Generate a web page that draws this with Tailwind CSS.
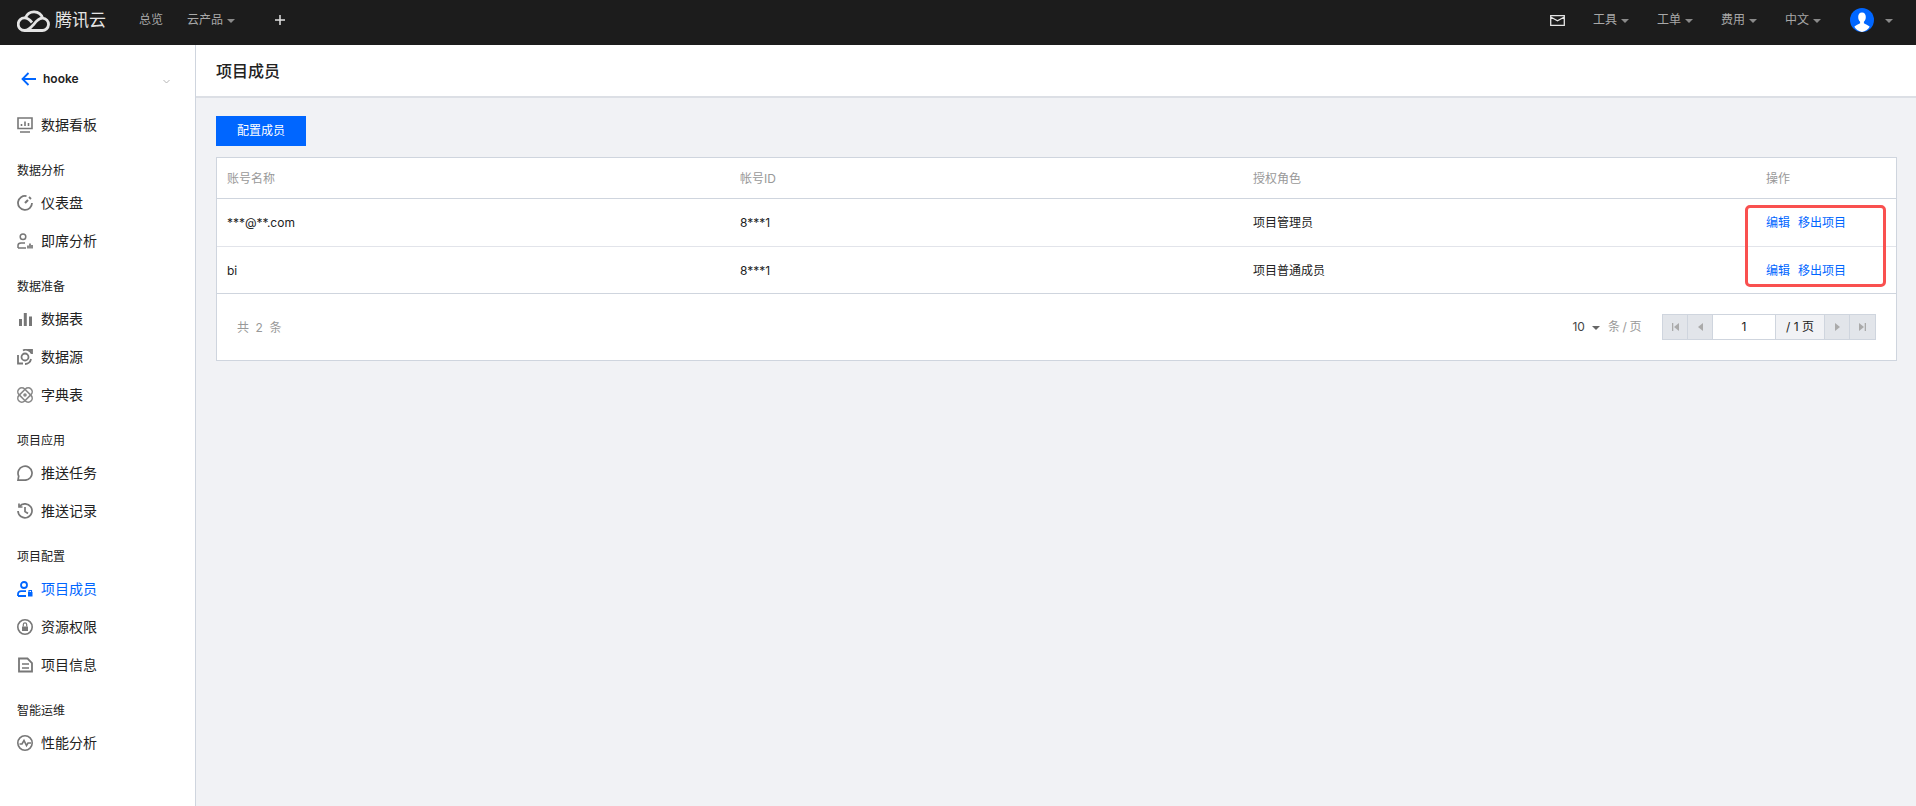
<!DOCTYPE html>
<html lang="zh-CN">
<head>
  <meta charset="UTF-8" />
  <meta name="viewport" content="width=device-width, initial-scale=1.0" />
  <title>项目成员</title>
  <script src="https://cdn.jsdelivr.net/npm/@tailwindcss/browser@4"></script>
</head>
<body class="h-[806px] overflow-hidden bg-[#f1f2f5] font-['Inter','Noto_Sans_CJK_SC',sans-serif] text-xs text-[#222]">
  <!-- top bar -->
  <header class="flex h-[45px] items-center bg-[#1c1c1c] pb-[5px] text-[#a8a8a8]">
    <svg class="ml-[17px] h-[24px] w-[33px]" viewBox="0 0 33 24" fill="none" stroke="#e4e4e4" stroke-width="2.8">
      <path d="M7.500 22.500h17.500a6.200 6.200 0 0 0 .6-12.400A9 9 0 0 0 8.600 9.600" />
      <path d="M25 10.200c-4 .2-6.500 4-9 7s-4.600 5.300-8.500 5.300a6.300 6.300 0 0 1 0-12.600c3.500 0 5.500 2.200 7.500 4.600" />
    </svg>
    <span class="ml-[5px] w-[84px] text-[17px] text-[#e4e4e4]">腾讯云</span>
    <span>总览</span>
    <span class="ml-[24px]">云产品</span>
    <i class="ml-[4px] mt-[1px] h-0 w-0 border-x-[4px] border-t-[4px] border-x-transparent border-t-[#8a8a8a]"></i>
    <svg class="ml-[40px] h-[10px] w-[10px]" viewBox="0 0 10 10" stroke="#e0e0e0" stroke-width="1.500"><path d="M5 0v10M0 5h10" /></svg>

    <svg class="ml-auto h-[11px] w-[15px]" viewBox="0 0 15 11" fill="none" stroke="#e4e4e4" stroke-width="1.300"><path d="M.7.7h13.600v9.600H.7zM.7 2l6.800 3.700L14.300 2" /></svg>
    <span class="ml-[28px]">工具</span>
    <i class="ml-[4px] mt-[1px] h-0 w-0 border-x-[4px] border-t-[4px] border-x-transparent border-t-[#8a8a8a]"></i>
    <span class="ml-[28px]">工单</span>
    <i class="ml-[4px] mt-[1px] h-0 w-0 border-x-[4px] border-t-[4px] border-x-transparent border-t-[#8a8a8a]"></i>
    <span class="ml-[28px]">费用</span>
    <i class="ml-[4px] mt-[1px] h-0 w-0 border-x-[4px] border-t-[4px] border-x-transparent border-t-[#8a8a8a]"></i>
    <span class="ml-[28px]">中文</span>
    <i class="ml-[4px] mt-[1px] h-0 w-0 border-x-[4px] border-t-[4px] border-x-transparent border-t-[#8a8a8a]"></i>
    <svg class="ml-[29px] h-[24px] w-[24px]" viewBox="0 0 24 24">
      <circle cx="12" cy="12" r="12" fill="#0066ff" />
      <path d="M12 4.500c2.600 0 3.800 2 3.800 4.500s-1 3.700-1.900 4.700v1.500c1.400 1.200 4.500 1.900 5.800 3.600A12 12 0 0 1 12 24a12 12 0 0 1-7.700-5.200c1.300-1.700 4.400-2.400 5.800-3.600v-1.500C9.200 12.700 8.200 11.500 8.200 9s1.200-4.500 3.800-4.500z" fill="#fff" />
    </svg>
    <i class="ml-[11px] mr-[23px] mt-[1px] h-0 w-0 border-x-[4px] border-t-[4px] border-x-transparent border-t-[#8a8a8a]"></i>
  </header>

  <div class="flex h-[761px]">
    <!-- sidebar -->
    <aside class="w-[196px] shrink-0 border-r border-[#cfd5de] bg-white pl-[17px] text-sm">
      <div class="flex h-[61px] items-center pt-[7px]">
        <svg class="ml-[4px] h-[14px] w-[15px]" viewBox="0 0 15 14" fill="none" stroke="#0066ff" stroke-width="1.800"><path d="M15 7H1.500M7.500 1l-6 6 6 6" /></svg>
        <span class="ml-[7px] w-[120px] text-xs font-semibold">hooke</span>
        <svg class="mt-[4px] h-[5px] w-[7px]" viewBox="0 0 7 5" fill="none" stroke="#b5b5b5"><path d="M.5 1l3 3 3-3" /></svg>
      </div>

      <a class="flex h-[38px] items-center gap-[8px]">
        <svg class="h-[16px] w-[16px]" viewBox="0 0 16 16" fill="none" stroke="#777" stroke-width="1.600"><path d="M1 1h14v10.500H1zM3 15h10" /><path d="M4.500 9V7M8 9V4.500M11.500 9V6" /></svg>
        数据看板
      </a>

      <p class="mt-[14px] flex h-[26px] items-center text-xs">数据分析</p>
      <a class="flex h-[38px] items-center gap-[8px]">
        <svg class="h-[16px] w-[16px]" viewBox="0 0 16 16" fill="none" stroke="#777" stroke-width="1.800"><path d="M9.500 1.100A7 7 0 1 0 15 8" /><path d="M11 5L8 8" stroke-width="2.200" /><path d="M12 2l2 2" /></svg>
        仪表盘
      </a>
      <a class="flex h-[38px] items-center gap-[8px]">
        <svg class="h-[16px] w-[16px]" viewBox="0 0 16 16" fill="none" stroke="#777" stroke-width="1.500"><circle cx="6" cy="3.700" r="2.800" /><path d="M1 15v-2.500c0-1.500 1.500-2.500 3-2.500h4M1 15h8" /><path d="M11 15.500v-3M13 15.500v-5M15 15.500V12" stroke-width="1.700" /></svg>
        即席分析
      </a>

      <p class="mt-[14px] flex h-[26px] items-center text-xs">数据准备</p>
      <a class="flex h-[38px] items-center gap-[8px]">
        <svg class="h-[16px] w-[16px]" viewBox="0 0 16 16" fill="#777"><path d="M2 8h3v7H2zM6.800 2h3v13h-3zM12 5.500h3V15h-3z" /></svg>
        数据表
      </a>
      <a class="flex h-[38px] items-center gap-[8px]">
        <svg class="h-[16px] w-[16px]" viewBox="0 0 16 16" fill="none" stroke="#777" stroke-width="1.800"><path d="M1 6v8.500h5M6 1.500a6 6 0 0 1 8.500 3" /><circle cx="8" cy="8" r="3.500" /><path d="M11 1h4v4" /><path d="M8 15a6 6 0 0 0 6-5" /></svg>
        数据源
      </a>
      <a class="flex h-[38px] items-center gap-[8px]">
        <svg class="h-[16px] w-[16px]" viewBox="0 0 16 16" fill="none" stroke="#888" stroke-width="1.600"><rect x="-.5" y="4" width="17" height="8" rx="4" transform="rotate(45 8 8)" /><rect x="-.5" y="4" width="17" height="8" rx="4" transform="rotate(-45 8 8)" /><circle cx="8" cy="8" r="1" fill="#888" /></svg>
        字典表
      </a>

      <p class="mt-[14px] flex h-[26px] items-center text-xs">项目应用</p>
      <a class="flex h-[38px] items-center gap-[8px]">
        <svg class="h-[16px] w-[16px]" viewBox="0 0 16 16" fill="none" stroke="#777" stroke-width="1.700"><path d="M1 15.200h7a7 7 0 1 0-6.300-4L1 15.200z" /></svg>
        推送任务
      </a>
      <a class="flex h-[38px] items-center gap-[8px]">
        <svg class="h-[16px] w-[16px]" viewBox="0 0 16 16" fill="none" stroke="#777" stroke-width="1.700"><path d="M2.500 3.500A7 7 0 1 1 1 8" /><path d="M2 .500v3.500h3.500M8 4v4.500l3 2" /></svg>
        推送记录
      </a>

      <p class="mt-[14px] flex h-[26px] items-center text-xs">项目配置</p>
      <a class="flex h-[38px] items-center gap-[8px] text-[#0066ff]">
        <svg class="h-[16px] w-[16px]" viewBox="0 0 16 16" fill="none" stroke="#0066ff" stroke-width="1.800"><circle cx="7" cy="4" r="3" /><path d="M1 15v-2c0-1.500 1.500-2.800 3-2.800h5M1 15h8" /><rect x="11" y="11" width="4.500" height="4.500" fill="#0066ff" stroke="none" /><path d="M12 11V9.500h2.500V11" stroke-width="1.100" /></svg>
        项目成员
      </a>
      <a class="flex h-[38px] items-center gap-[8px]">
        <svg class="h-[16px] w-[16px]" viewBox="0 0 16 16" fill="none" stroke="#777" stroke-width="1.600"><circle cx="8" cy="8" r="7.200" /><rect x="5" y="7.500" width="6" height="4.500" fill="#777" stroke="none" /><path d="M6.300 7.500V5.500a1.700 1.700 0 0 1 3.400 0v2" stroke-width="1.200" /></svg>
        资源权限
      </a>
      <a class="flex h-[38px] items-center gap-[8px]">
        <svg class="h-[16px] w-[16px]" viewBox="0 0 16 16" fill="none" stroke="#777" stroke-width="1.800"><path d="M2 1.500h8.500L15 6v8.500H2z" /><path d="M5 7h7M5 11h7" stroke-width="1.500" /></svg>
        项目信息
      </a>

      <p class="mt-[14px] flex h-[26px] items-center text-xs">智能运维</p>
      <a class="flex h-[38px] items-center gap-[8px]">
        <svg class="h-[16px] w-[16px]" viewBox="0 0 16 16" fill="none" stroke="#777" stroke-width="1.600"><circle cx="8" cy="8" r="7.200" /><path d="M2.500 9h2.500l2-3.500 2.500 5 1.500-2.500h3" /></svg>
        性能分析
      </a>
    </aside>

    <!-- content -->
    <main class="min-w-0 flex-1">
      <div class="flex h-[53px] items-center border-b-2 border-[#dcdfe5] bg-white pl-[20px] pt-[1px] text-base font-medium">项目成员</div>

      <div class="pl-[20px] pr-[19px] pt-[18px]">
        <button class="h-[30px] w-[90px] bg-[#0066ff] text-white">配置成员</button>

        <div class="relative mt-[11px] border border-[#cfd5de] bg-white">
          <table class="w-full table-fixed border-collapse text-left">
            <colgroup>
              <col class="w-[513px]" />
              <col class="w-[513px]" />
              <col class="w-[514px]" />
              <col />
            </colgroup>
            <thead class="border-b border-[#cfd5de] text-[#999]">
              <tr class="h-[40px]">
                <th class="px-[10px] pt-[2px] font-normal">账号名称</th>
                <th class="px-[10px] pt-[2px] font-normal">帐号ID</th>
                <th class="px-[10px] pt-[2px] font-normal">授权角色</th>
                <th class="px-[9px] pt-[2px] font-normal">操作</th>
              </tr>
            </thead>
            <tbody>
              <tr class="h-[48px] border-b border-[#e2e4ea]">
                <td class="px-[10px] pt-[2px]">***@**.com</td>
                <td class="px-[10px] pt-[2px]">8***1</td>
                <td class="px-[10px] pt-[2px]">项目管理员</td>
                <td class="px-[9px] pt-[2px] text-[#0066ff]"><a>编辑</a><a class="ml-[8px]">移出项目</a></td>
              </tr>
              <tr class="h-[47px] border-b border-[#cfd5de]">
                <td class="px-[10px] pt-[2px]">bi</td>
                <td class="px-[10px] pt-[2px]">8***1</td>
                <td class="px-[10px] pt-[2px]">项目普通成员</td>
                <td class="px-[9px] pt-[2px] text-[#0066ff]"><a>编辑</a><a class="ml-[8px]">移出项目</a></td>
              </tr>
            </tbody>
          </table>

          <div class="flex h-[66px] items-center pl-[20px] pr-[20px] text-[#999]">
            <span class="pt-[2px] tracking-[1.600px]">共 2 条</span>
            <span class="ml-auto pt-[1px] text-[#444]">10</span>
            <i class="ml-[7px] mt-[3px] h-0 w-0 border-x-[4px] border-t-[4px] border-x-transparent border-t-[#666]"></i>
            <span class="ml-[8px] pt-[1px] tracking-[-0.4px]">条 / 页</span>
            <div class="ml-[21px] flex h-[26px] border border-[#cfd5de] text-[#222]">
              <span class="flex w-[25px] items-center justify-center border-r border-[#cfd5de] bg-[#e2e5ea]">
                <svg class="h-[8px] w-[7px]" viewBox="0 0 7 8" fill="#aaa"><path d="M0 0h1.300v8H0zM7 0v8L2 4z" /></svg>
              </span>
              <span class="flex w-[25px] items-center justify-center border-r border-[#cfd5de] bg-[#e2e5ea]">
                <svg class="h-[8px] w-[5px]" viewBox="0 0 5 8" fill="#aaa"><path d="M5 0v8L0 4z" /></svg>
              </span>
              <span class="flex w-[63px] items-center justify-center border-r border-[#cfd5de] bg-white pt-[1px]">1</span>
              <span class="flex w-[49px] items-center justify-center border-r border-[#cfd5de] bg-[#f1f2f5] pt-[1px]">/ 1 页</span>
              <span class="flex w-[25px] items-center justify-center border-r border-[#cfd5de] bg-[#e2e5ea]">
                <svg class="h-[8px] w-[5px]" viewBox="0 0 5 8" fill="#aaa"><path d="M0 0v8l5-4z" /></svg>
              </span>
              <span class="flex w-[25px] items-center justify-center bg-[#e2e5ea]">
                <svg class="h-[8px] w-[7px]" viewBox="0 0 7 8" fill="#aaa"><path d="M0 0v8l5-4zM5.700 0H7v8H5.700z" /></svg>
              </span>
            </div>
          </div>

          <!-- annotation over the action column -->
          <div class="absolute left-[1528px] top-[47px] h-[82px] w-[141px] rounded-[5px] border-[3px] border-[#f9504f]"></div>
        </div>
      </div>
    </main>
  </div>
</body>
</html>
